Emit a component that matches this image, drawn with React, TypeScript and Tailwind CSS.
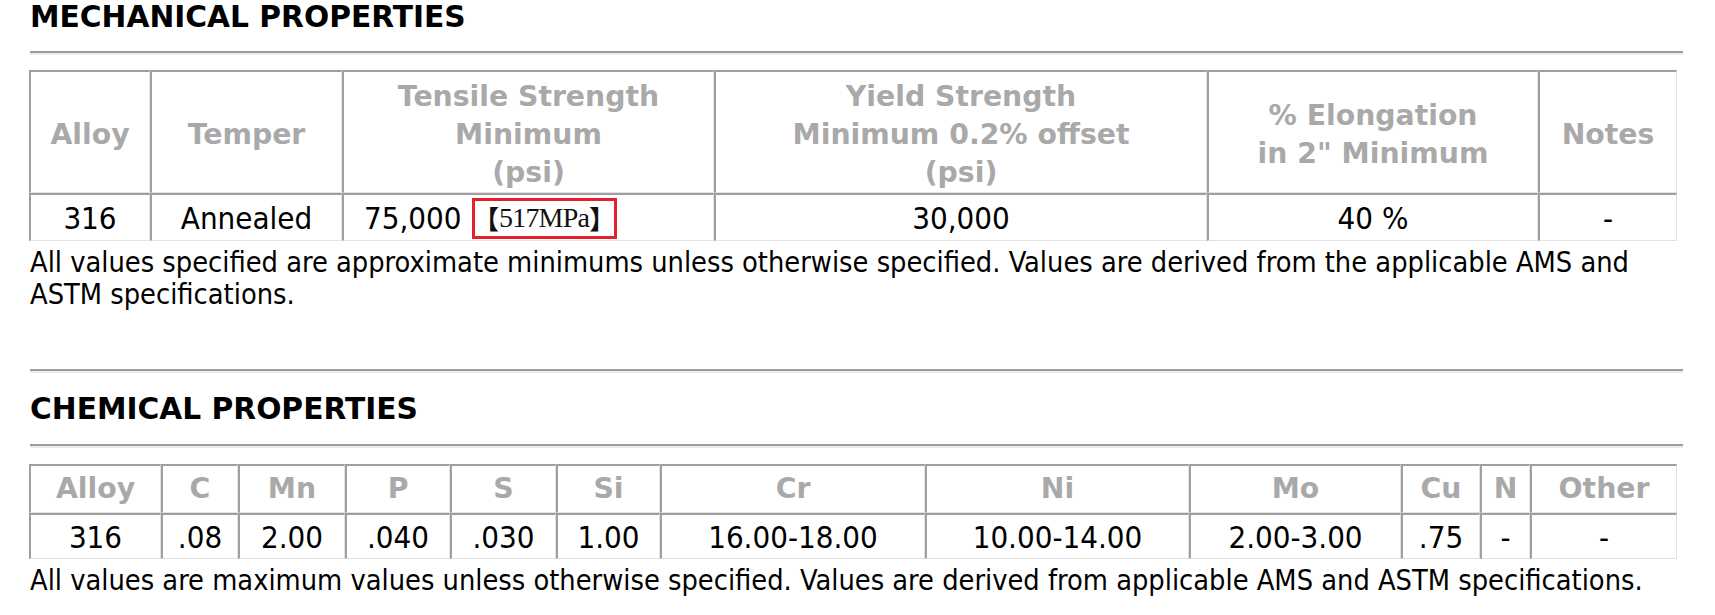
import React from 'react';

const bold = { fontFamily: '"DejaVu Sans", Verdana, sans-serif' };

// Each cell draws its own dark top/left edge and light bottom/right edge,
// like the classic bordered HTML table this came from.
const cell =
  'border-t-2 border-l-2 border-r border-b border-t-[#9f9f9f] border-l-[#9f9f9f] border-r-[#e2e2e2] border-b-[#e2e2e2] p-0 align-middle text-center';

const Rule = ({ className }: { className: string }) => (
  <div className={`${className} w-[1653px]`}>
    <div className="h-[2px] bg-[#9c9c9c]" />
    <div className="h-[2px] bg-[#ebebeb]" />
  </div>
);

const Title = ({ children }: { children: React.ReactNode }) => (
  <div className="text-[29.7px] leading-[34px] font-bold text-black font-['DejaVu_Sans',sans-serif]">
    {children}
  </div>
);

const mechCols = [
  { w: 'w-[121px]', head: ['Alloy'], body: '316' },
  { w: 'w-[192px]', head: ['Temper'], body: 'Annealed' },
  { w: 'w-[372px]', head: ['Tensile Strength', 'Minimum', '(psi)'], body: null },
  { w: 'w-[493px]', head: ['Yield Strength', 'Minimum 0.2% offset', '(psi)'], body: '30,000' },
  { w: 'w-[331px]', head: ['% Elongation', 'in 2" Minimum'], body: '40 %' },
  { w: 'w-[139px]', head: ['Notes'], body: '-' },
];

const chemCols = [
  { w: 'w-[132px]', head: 'Alloy', body: '316' },
  { w: 'w-[77px]', head: 'C', body: '.08' },
  { w: 'w-[107px]', head: 'Mn', body: '2.00' },
  { w: 'w-[105px]', head: 'P', body: '.040' },
  { w: 'w-[106px]', head: 'S', body: '.030' },
  { w: 'w-[104px]', head: 'Si', body: '1.00' },
  { w: 'w-[265px]', head: 'Cr', body: '16.00-18.00' },
  { w: 'w-[264px]', head: 'Ni', body: '10.00-14.00' },
  { w: 'w-[212px]', head: 'Mo', body: '2.00-3.00' },
  { w: 'w-[79px]', head: 'Cu', body: '.75' },
  { w: 'w-[50px]', head: 'N', body: '-' },
  { w: 'w-[147px]', head: 'Other', body: '-' },
];

export default function App() {
  return (
    <div className="w-[1715px] h-[615px] bg-white pl-[30px] font-['DejaVu_Sans_Condensed','DejaVu_Sans',sans-serif] text-black overflow-hidden">
      <Title>MECHANICAL PROPERTIES</Title>
      <Rule className="mt-[17px]" />

      <table className="mt-[15px] ml-[-1px] border-separate border-spacing-0 table-fixed w-[1648px]">
        <thead>
          <tr>
            {mechCols.map((c) => (
              <th
                key={c.head[0]}
                style={bold}
                className={`${cell} ${c.w} h-[123px] pt-[6px] text-[28.3px] leading-[38px] font-bold text-[#a9a9a9]`}
              >
                {c.head.map((line) => (
                  <div key={line}>{line}</div>
                ))}
              </th>
            ))}
          </tr>
        </thead>
        <tbody>
          <tr>
            {mechCols.map((c) =>
              c.body === null ? (
                <td key={c.w} className={`${cell} h-[48px] text-[31px] leading-[36px] pl-[20px]`}>
                  <div className="flex items-center">
                    <span>75,000</span>
                    <span className="flex items-center justify-center ml-[10px] mt-[1px] border-[3px] border-[#e4212b] h-[41px] w-[145px] leading-[34px] text-[#111]">
                      <span className="font-['Noto_Sans_CJK_SC',sans-serif] font-bold text-[26px]">【</span>
                      <span className="font-['Liberation_Serif',serif] text-[28px] tracking-[-0.8px]">517MPa</span>
                      <span className="font-['Noto_Sans_CJK_SC',sans-serif] font-bold text-[26px]">】</span>
                    </span>
                  </div>
                </td>
              ) : (
                <td key={c.w} className={`${cell} h-[48px] text-[31px] leading-[36px]`}>
                  {c.body}
                </td>
              )
            )}
          </tr>
        </tbody>
      </table>

      <p className="mt-[5px] w-[1655px] text-[28.7px] leading-[32px]">
        All values specified are approximate minimums unless otherwise specified. Values are derived from the applicable AMS and
        ASTM specifications.
      </p>

      <Rule className="mt-[59px]" />
      <div className="mt-[19px]">
        <Title>CHEMICAL PROPERTIES</Title>
      </div>
      <Rule className="mt-[18px]" />

      <table className="mt-[16px] ml-[-1px] border-separate border-spacing-0 table-fixed w-[1648px]">
        <thead>
          <tr>
            {chemCols.map((c) => (
              <th
                key={c.head}
                style={bold}
                className={`${cell} ${c.w} h-[49px] text-[28.3px] leading-[38px] font-bold text-[#a9a9a9]`}
              >
                {c.head}
              </th>
            ))}
          </tr>
        </thead>
        <tbody>
          <tr>
            {chemCols.map((c) => (
              <td key={c.head} className={`${cell} h-[46px] text-[31px] leading-[36px]`}>
                {c.body}
              </td>
            ))}
          </tr>
        </tbody>
      </table>

      <p className="mt-[5px] w-[1655px] text-[28.7px] leading-[32px]">
        All values are maximum values unless otherwise specified. Values are derived from applicable AMS and ASTM specifications.
      </p>
    </div>
  );
}
